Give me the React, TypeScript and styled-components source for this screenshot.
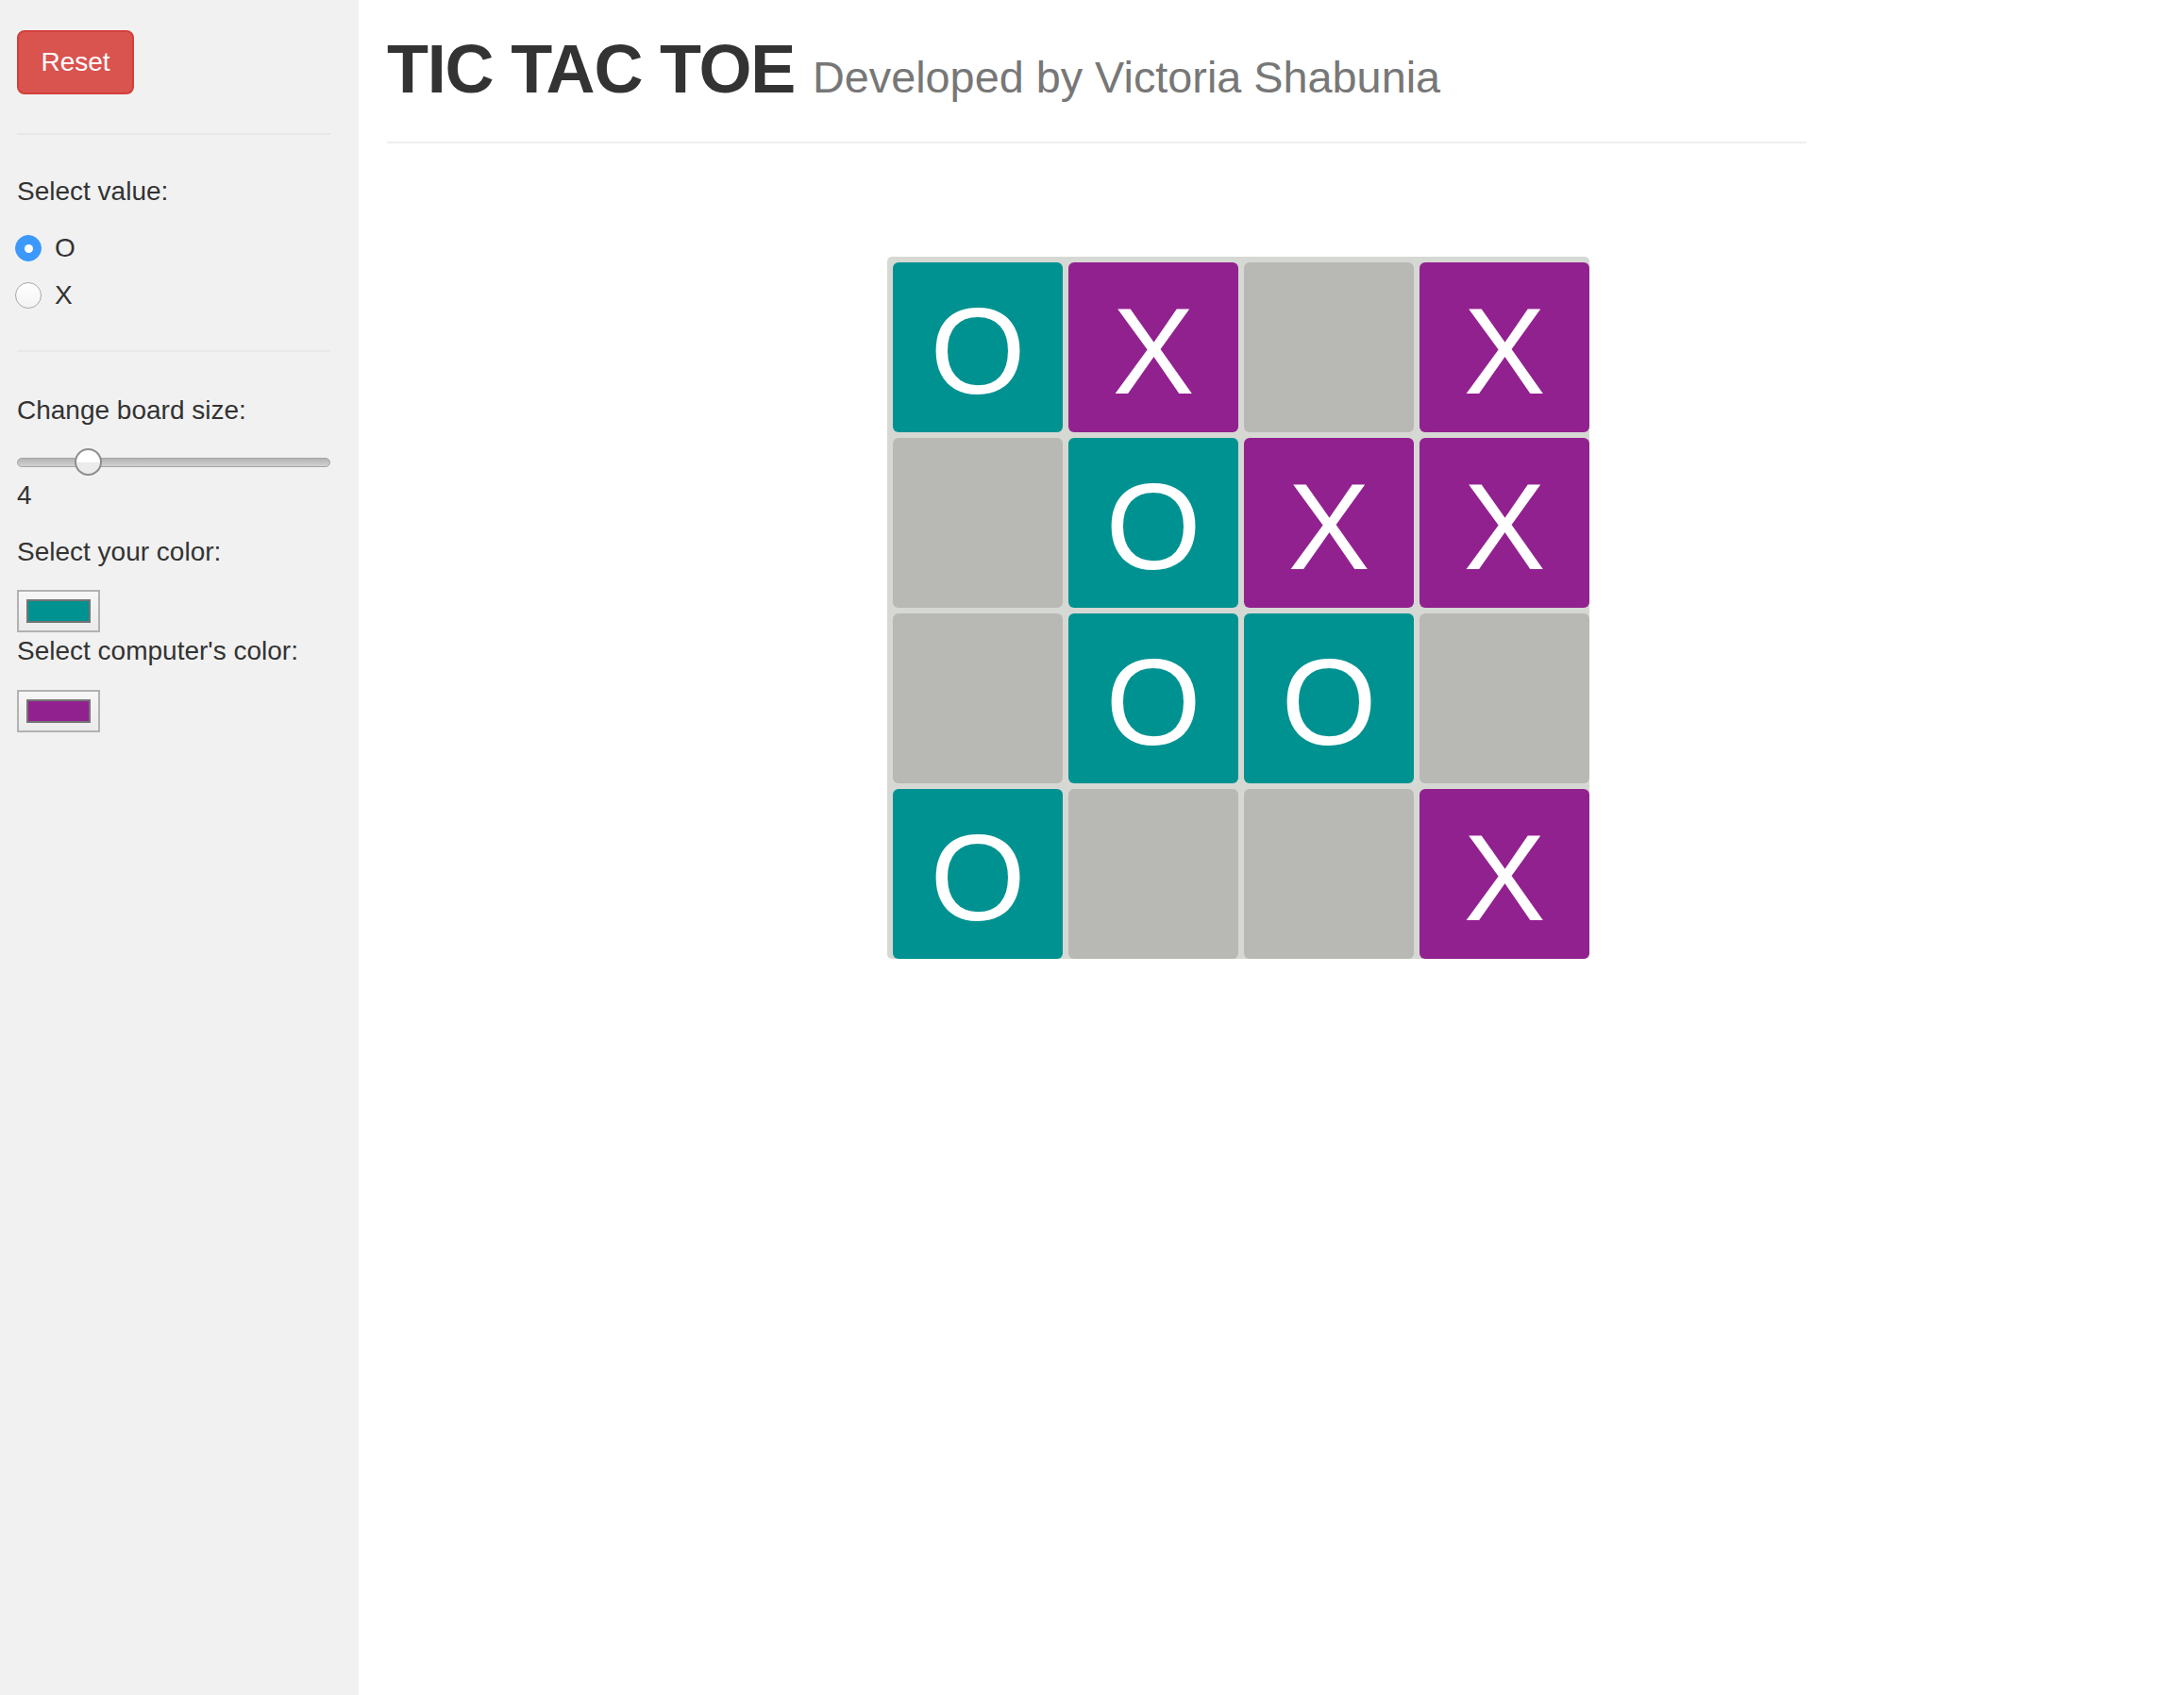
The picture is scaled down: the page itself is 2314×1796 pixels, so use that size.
import React from "react";
import styled, { createGlobalStyle } from "styled-components";

const GlobalStyle = createGlobalStyle`
  html, body, #root { margin: 0; padding: 0; min-height: 100%; }
  body {
    font-family: "Liberation Sans", Arial, Helvetica, sans-serif;
    font-size: 28px;
    line-height: 40px;
    color: #333;
    background: #fff;
  }
  * { box-sizing: border-box; }
`;

const Page = styled.div`
  display: flex;
  min-height: 100vh;
`;

const Sidebar = styled.aside`
  width: 380px;
  flex-shrink: 0;
  background: #f1f1f1;
  padding: 32px 30px 0 18px;
  display: flex;
  flex-direction: column;
  align-items: flex-start;
`;

const ResetButton = styled.button`
  width: 124px;
  height: 68px;
  background: #d9534f;
  border: 2px solid #d43f3a;
  border-radius: 8px;
  color: #fff;
  font-family: inherit;
  font-size: 28px;
  line-height: 40px;
  padding: 0;
  cursor: pointer;
`;

const Divider = styled.hr<{ $top: number }>`
  align-self: stretch;
  border: 0;
  border-top: 2px solid #e8e8e8;
  margin: ${(p) => p.$top}px 0 0 0;
  height: 0;
`;

const Label = styled.div<{ $top: number }>`
  margin-top: ${(p) => p.$top}px;
  height: 40px;
  line-height: 40px;
  white-space: nowrap;
`;

const RadioRow = styled.label<{ $top: number }>`
  margin-top: ${(p) => p.$top}px;
  margin-left: -2px;
  height: 40px;
  display: flex;
  align-items: center;
  gap: 14px;
  cursor: pointer;
`;

const Radio = styled.input`
  appearance: none;
  -webkit-appearance: none;
  width: 28px;
  height: 28px;
  margin: 0;
  border-radius: 50%;
  border: 1px solid #a8a8a8;
  background: linear-gradient(#ffffff, #f3f3f3);
  position: relative;
  &:checked {
    border-color: #3b99fc;
    background: #3b99fc;
  }
  &:checked::after {
    content: "";
    position: absolute;
    left: 50%;
    top: 50%;
    width: 9px;
    height: 9px;
    margin: -4.5px 0 0 -4.5px;
    border-radius: 50%;
    background: #fff;
  }
`;

const Range = styled.input`
  appearance: none;
  -webkit-appearance: none;
  align-self: stretch;
  margin: 20px 0 0 0;
  height: 30px;
  background: transparent;
  &::-webkit-slider-runnable-track {
    height: 10px;
    border-radius: 5px;
    border: 1px solid #a4a4a4;
    background: linear-gradient(#b4b4b4, #d2d2d2);
  }
  &::-webkit-slider-thumb {
    -webkit-appearance: none;
    width: 29px;
    height: 29px;
    margin-top: -11px;
    border-radius: 50%;
    border: 2px solid #8e8e8e;
    background: linear-gradient(#ffffff 50%, #ececec 50%);
  }
`;

const ValueText = styled.div`
  height: 40px;
  line-height: 40px;
`;

const ColorPicker = styled.div<{ $top: number }>`
  margin-top: ${(p) => p.$top}px;
  width: 88px;
  height: 45px;
  padding: 8px;
  border: 2px solid #b2b2b2;
  background: linear-gradient(#f6f6f6, #ebebeb);
`;

const Swatch = styled.div<{ $color: string }>`
  width: 100%;
  height: 100%;
  border: 2px solid #747474;
  background: ${(p) => p.$color};
`;

const Main = styled.main`
  flex: 1;
  padding: 34px 0 0 30px;
`;

const Content = styled.div`
  width: 1504px;
`;

const Header = styled.header`
  padding-bottom: 17px;
  border-bottom: 2px solid #eee;
`;

const Title = styled.h1`
  margin: 0 0 20px 0;
  font-size: 72px;
  line-height: 79px;
  font-weight: 700;
  letter-spacing: -1.2px;
  color: #333;
  white-space: nowrap;
`;

const Subtitle = styled.small`
  font-size: 46.8px;
  line-height: 1;
  font-weight: 400;
  letter-spacing: 0;
  color: #777;
`;

const Board = styled.div`
  margin: 120px 0 0 530px;
  width: fit-content;
  display: grid;
  grid-template-columns: repeat(4, 180px);
  grid-auto-rows: 180px;
  gap: 6px;
  padding: 6px 0 0 6px;
  background: #d6d8d3;
  border-radius: 5px;
`;

type Mark = "O" | "X" | "";

const Cell = styled.div<{ $mark: Mark }>`
  border-radius: 6px;
  background: ${(p) =>
    p.$mark === "O" ? "#009291" : p.$mark === "X" ? "#922190" : "#b8b9b5"};
  color: #fff;
  font-size: 130px;
  line-height: 180px;
  padding-top: 4px;
  text-align: center;
  font-family: "Liberation Sans", Arial, Helvetica, sans-serif;
  font-weight: 400;
  user-select: none;
`;

const board: Mark[][] = [
  ["O", "X", "", "X"],
  ["", "O", "X", "X"],
  ["", "O", "O", ""],
  ["O", "", "", "X"],
];

export default function App() {
  return (
    <>
      <GlobalStyle />
      <Page>
        <Sidebar>
          <ResetButton type="button">Reset</ResetButton>
          <Divider $top={41} />
          <Label $top={40}>Select value:</Label>
          <RadioRow $top={20}>
            <Radio type="radio" name="value" defaultChecked />
            <span>O</span>
          </RadioRow>
          <RadioRow $top={10}>
            <Radio type="radio" name="value" />
            <span>X</span>
          </RadioRow>
          <Divider $top={38} />
          <Label $top={42}>Change board size:</Label>
          <Range type="range" min={3} max={8} defaultValue={4} />
          <ValueText>4</ValueText>
          <Label $top={20}>Select your color:</Label>
          <ColorPicker $top={20}>
            <Swatch $color="#009291" />
          </ColorPicker>
          <Label $top={0}>Select computer's color:</Label>
          <ColorPicker $top={21}>
            <Swatch $color="#922190" />
          </ColorPicker>
        </Sidebar>
        <Main>
          <Content>
            <Header>
              <Title>
                TIC TAC TOE <Subtitle>Developed by Victoria Shabunia</Subtitle>
              </Title>
            </Header>
            <Board>
              {board.flat().map((m, i) => (
                <Cell key={i} $mark={m}>
                  {m}
                </Cell>
              ))}
            </Board>
          </Content>
        </Main>
      </Page>
    </>
  );
}
